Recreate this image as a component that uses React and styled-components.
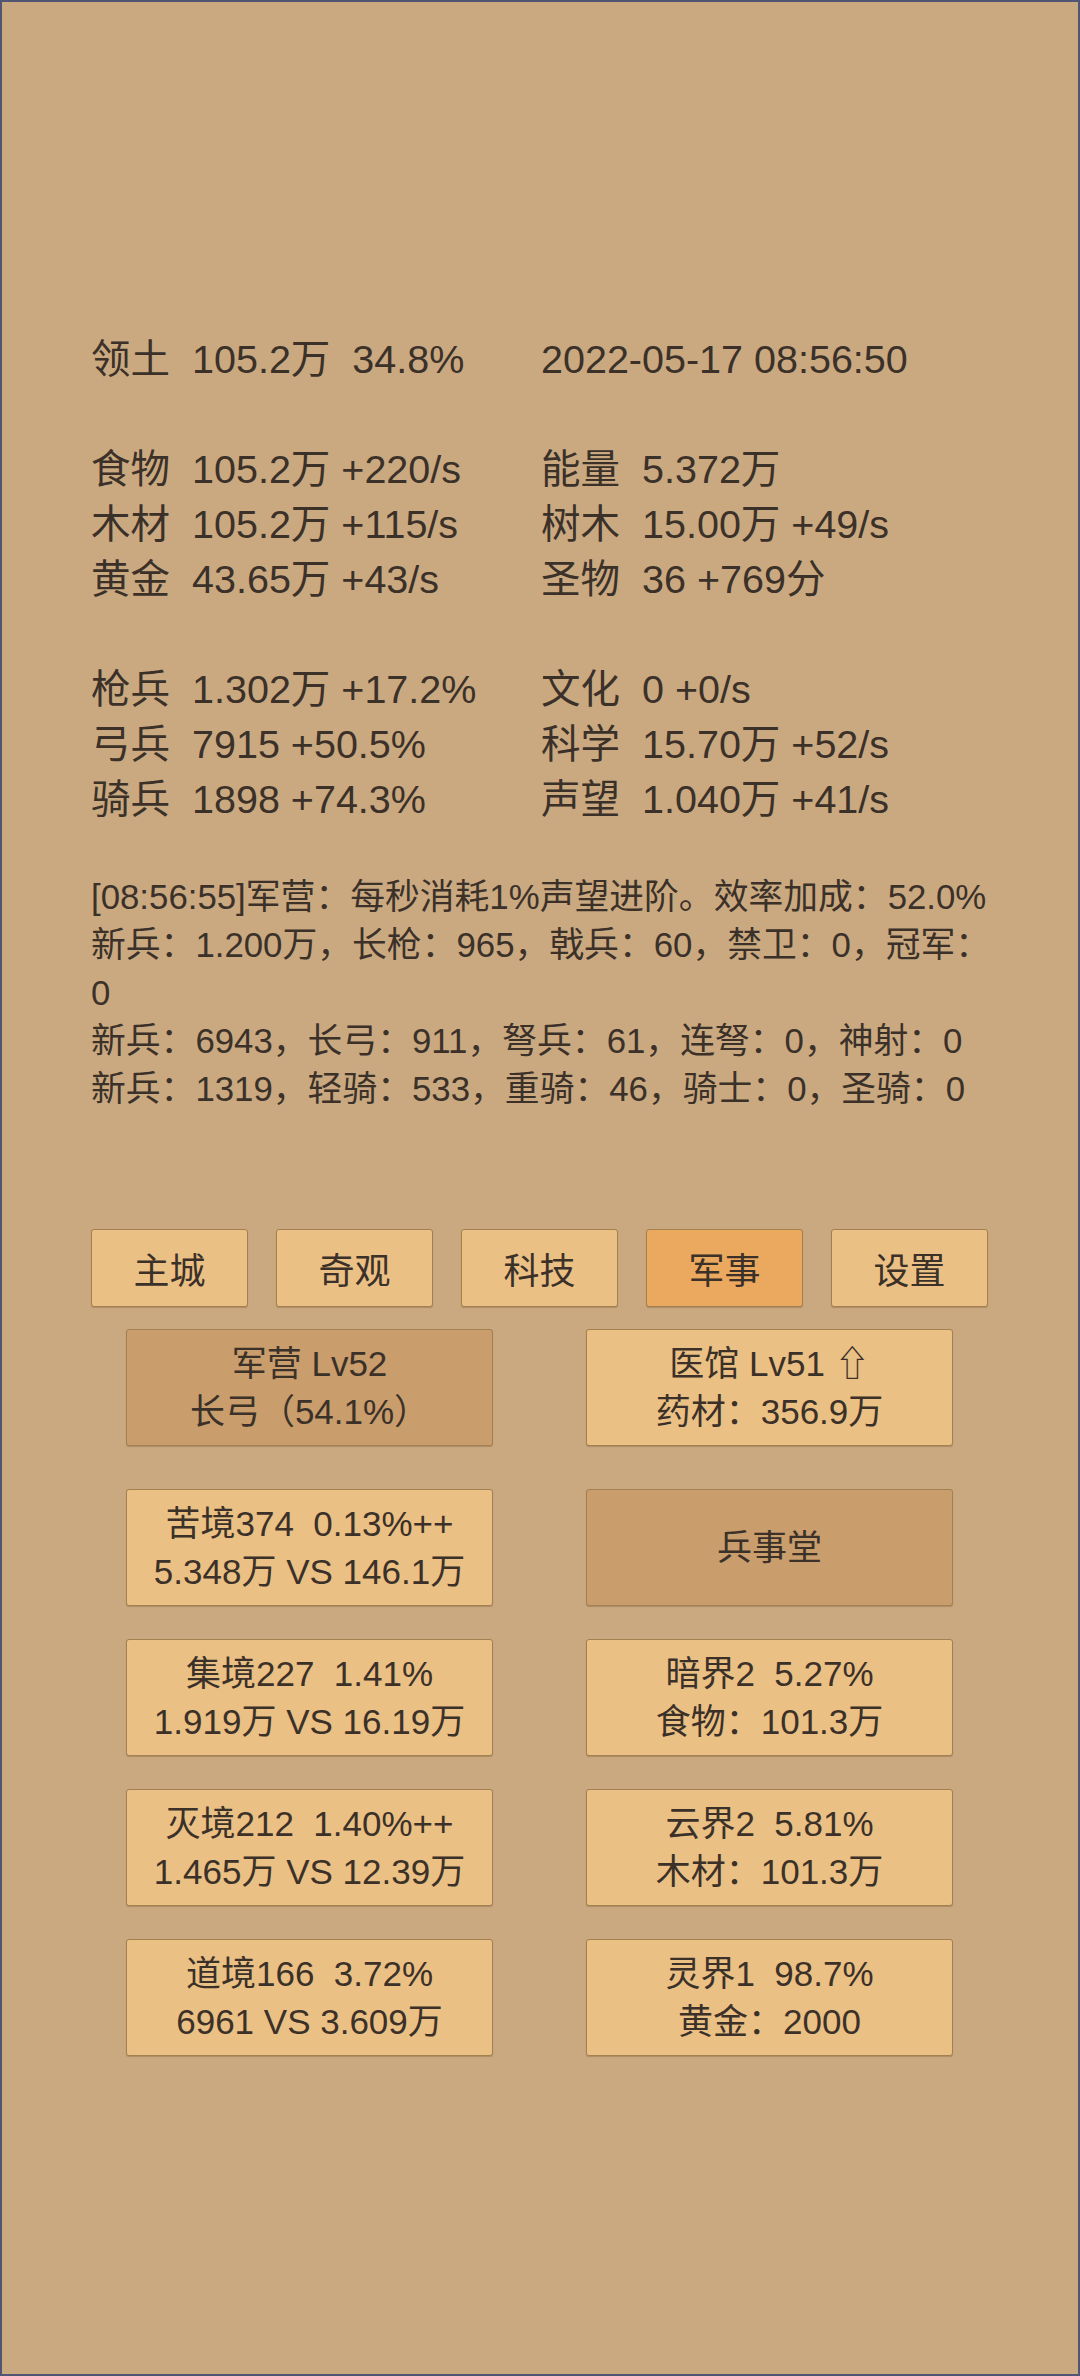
import React from 'react'
import styled, { createGlobalStyle } from 'styled-components'

const GlobalStyle = createGlobalStyle`
  html, body {
    margin: 0;
    padding: 0;
    background: #caa981;
  }
  * { box-sizing: border-box; }
`

const Page = styled.div`
  width: 1080px;
  height: 2376px;
  border: 2px solid #4f5572;
  background: #caa981;
  color: #3b3129;
  font-family: "Liberation Sans", "Noto Sans CJK SC", sans-serif;
  padding: 330px 0 0 89px;
  overflow: hidden;
`

const Stats = styled.div`
  display: grid;
  grid-template-columns: 450px 1fr;
  font-size: 39.5px;
  line-height: 55px;
`

const Stat = styled.div`
  white-space: pre;
`

const Label = styled.span`
  display: inline-block;
  width: 101px;
`

const Blank = styled.div`
  grid-column: 1 / -1;
  height: 55px;
`

const Log = styled.div`
  margin-top: 46px;
  width: 910px;
  font-size: 34.8px;
  line-height: 48px;
`

const Tabs = styled.div`
  display: flex;
  gap: 28px;
  margin: 116px 0 0 0;
`

const Tab = styled.div`
  width: 157px;
  height: 78px;
  display: flex;
  align-items: center;
  justify-content: center;
  font-size: 36px;
  border: 1px solid #a3804f;
  border-radius: 3px;
  box-shadow: 0 1px 1px rgba(80, 50, 20, 0.25);
  background: ${p => (p.$active ? '#eba85f' : '#ebc084')};
`

const Cards = styled.div`
  display: grid;
  grid-template-columns: 367px 367px;
  column-gap: 93px;
  row-gap: 33px;
  margin: ${p => p.$top}px 0 0 35px;
`

const Card = styled.div`
  height: 117px;
  display: flex;
  flex-direction: column;
  align-items: center;
  justify-content: center;
  font-size: 35px;
  line-height: 48px;
  white-space: pre;
  border: 1px solid #a3804f;
  border-radius: 3px;
  box-shadow: 0 1px 1px rgba(80, 50, 20, 0.25);
  background: ${p => (p.$dark ? '#c99d6c' : '#ebc084')};
`

const statRows = [
  [['领土', '105.2万  34.8%'], [null, '2022-05-17 08:56:50']],
  'blank',
  [['食物', '105.2万 +220/s'], ['能量', '5.372万']],
  [['木材', '105.2万 +115/s'], ['树木', '15.00万 +49/s']],
  [['黄金', '43.65万 +43/s'], ['圣物', '36 +769分']],
  'blank',
  [['枪兵', '1.302万 +17.2%'], ['文化', '0 +0/s']],
  [['弓兵', '7915 +50.5%'], ['科学', '15.70万 +52/s']],
  [['骑兵', '1898 +74.3%'], ['声望', '1.040万 +41/s']],
]

const logLines = [
  '[08:56:55]军营：每秒消耗1%声望进阶。效率加成：52.0%',
  '新兵：1.200万，长枪：965，戟兵：60，禁卫：0，冠军：0',
  '新兵：6943，长弓：911，弩兵：61，连弩：0，神射：0',
  '新兵：1319，轻骑：533，重骑：46，骑士：0，圣骑：0',
]

const tabs = ['主城', '奇观', '科技', '军事', '设置']

const topCards = [
  { lines: ['军营 Lv52', '长弓（54.1%）'], dark: true },
  { lines: ['医馆 Lv51 ⇧', '药材：356.9万'] },
]

const listCards = [
  { lines: ['苦境374  0.13%++', '5.348万 VS 146.1万'] },
  { lines: ['兵事堂'], dark: true },
  { lines: ['集境227  1.41%', '1.919万 VS 16.19万'] },
  { lines: ['暗界2  5.27%', '食物：101.3万'] },
  { lines: ['灭境212  1.40%++', '1.465万 VS 12.39万'] },
  { lines: ['云界2  5.81%', '木材：101.3万'] },
  { lines: ['道境166  3.72%', '6961 VS 3.609万'] },
  { lines: ['灵界1  98.7%', '黄金：2000'] },
]

function StatCell({ item }) {
  const [label, value] = item
  if (!label) return <Stat>{value}</Stat>
  return (
    <Stat>
      <Label>{label}</Label>
      {value}
    </Stat>
  )
}

function CardList({ items, top }) {
  return (
    <Cards $top={top}>
      {items.map((c, i) => (
        <Card key={i} $dark={c.dark}>
          {c.lines.map((l, j) => <div key={j}>{l}</div>)}
        </Card>
      ))}
    </Cards>
  )
}

export default function App() {
  return (
    <>
      <GlobalStyle />
      <Page>
        <Stats>
          {statRows.map((row, i) =>
            row === 'blank' ? (
              <Blank key={i} />
            ) : (
              <React.Fragment key={i}>
                <StatCell item={row[0]} />
                <StatCell item={row[1]} />
              </React.Fragment>
            )
          )}
        </Stats>
        <Log>
          {logLines.map((l, i) => <div key={i}>{l}</div>)}
        </Log>
        <Tabs>
          {tabs.map(t => (
            <Tab key={t} $active={t === '军事'}>{t}</Tab>
          ))}
        </Tabs>
        <CardList items={topCards} top={22} />
        <CardList items={listCards} top={43} />
      </Page>
    </>
  )
}
